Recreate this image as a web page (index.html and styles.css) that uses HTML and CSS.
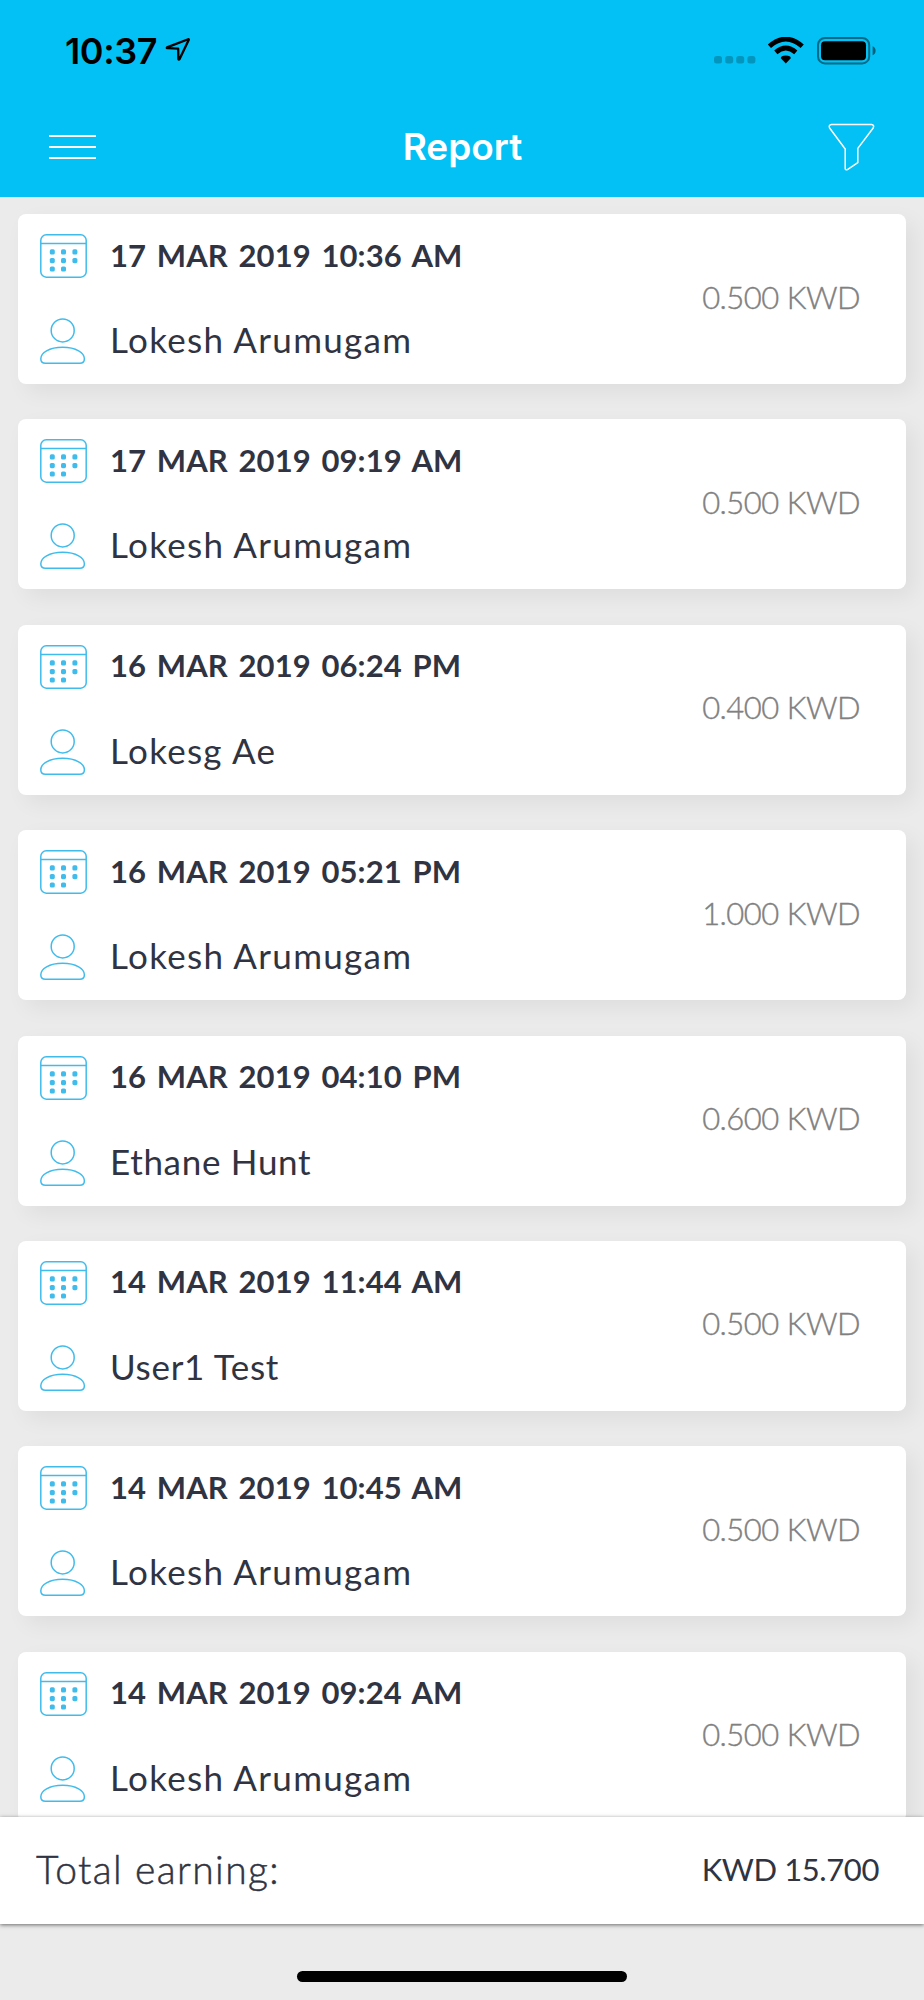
FILE: index.html
```html
<!DOCTYPE html>
<html lang="en">
<head>
<meta charset="utf-8">
<title>Report</title>
<link rel="stylesheet" href="styles.css">
</head>
<body>
<svg class="defs" width="0" height="0">
  <symbol id="calendar" viewBox="0 0 47 44">
    <rect x=".8" y=".8" width="45.4" height="42.4" rx="5.5" fill="none" stroke="#40bcec" stroke-width="1.5"/>
    <path d="M1 9.5H46" stroke="#40bcec" stroke-width="1.4"/>
    <g fill="#40bcec">
      <rect x="9.8" y="15.3" width="5" height="5.2" rx="1.6"/><rect x="21" y="15.3" width="5" height="5.2" rx="1.6"/><rect x="32.4" y="15.3" width="5" height="5.2" rx="1.6"/>
      <rect x="9.8" y="24" width="5" height="5.2" rx="1.6"/><rect x="21" y="24" width="5" height="5.2" rx="1.6"/><rect x="32.4" y="24" width="5" height="5.2" rx="1.6"/>
      <rect x="9.8" y="32.4" width="5" height="5.2" rx="1.6"/><rect x="21" y="32.4" width="5" height="5.2" rx="1.6"/>
    </g>
  </symbol>
  <symbol id="person" viewBox="0 0 47 47">
    <g fill="none" stroke="#40bcec" stroke-width="1.5">
      <circle cx="22.7" cy="12.4" r="11.5"/>
      <path d="M.8 40.8C.8 35 9 29.3 22.6 29.3S44.4 35 44.4 40.8Q44.4 45.3 39.8 45.3H5.4Q.8 45.3 .8 40.8Z"/>
    </g>
  </symbol>
</svg>
<div class="screen">
  <header class="header">
    <div class="status">
      <span class="clock">10:37</span>
      <svg class="location" width="26" height="25" viewBox="0 0 26 25"><path d="M23.2 2.2 2 10.4Q1.5 11 2.2 11.2L13.2 11.7 13.4 22.2Q13.8 23 14.5 22.2L23.8 2.8Q24 2 23.2 2.2Z" fill="none" stroke="#000" stroke-width="2.3" stroke-linejoin="round"/></svg>
      <svg class="signals" width="163" height="28" viewBox="0 0 163 28">
        <g fill="#000" fill-opacity=".22"><rect x="0" y="19" width="8" height="7.4" rx="2.5"/><rect x="11.2" y="19" width="8" height="7.4" rx="2.5"/><rect x="22.2" y="19" width="8" height="7.4" rx="2.5"/><rect x="33.4" y="19" width="8" height="7.4" rx="2.5"/></g>
        <path d="M55.6 8.6Q72-5.8 88.4 8.6" transform="translate(-.2 .7)" fill="none" stroke="#000" stroke-width="4.8"/>
        <path d="M61.8 15.4Q71.8 6.6 81.8 15.4" fill="none" stroke="#000" stroke-width="4.8"/>
        <path d="M66.8 21.3Q66.8 18.6 71.8 18.6T76.8 21.3L71.8 26.4Z"/>
        <rect x="104" y="1" width="51.2" height="25.4" rx="7" fill="none" stroke="#000" stroke-opacity=".45" stroke-width="2"/>
        <rect x="107" y="4.2" width="45" height="19" rx="4"/>
        <path d="M158.6 9.3Q161.6 10.5 161.6 13.8T158.6 18.3Z" fill-opacity=".5"/>
      </svg>
    </div>
    <div class="nav">
      <svg class="menu" width="48" height="27" viewBox="0 0 48 27"><path d="M0 2H47M0 13H47M0 24H47" stroke="#fff" stroke-width="2"/></svg>
      <h1 class="title">Report</h1>
      <svg class="filter" width="47" height="48" viewBox="0 0 47 48"><path d="M3.5 1.5H43.5Q46.6 2 45.2 5L29.8 25.4V39.7L19.4 46.6Q17.4 47.2 17.2 45.3V26L1.6 5Q.3 2 3.5 1.5Z" fill="none" stroke="#fff" stroke-width="1.5" stroke-linejoin="round"/></svg>
    </div>
  </header>
  <main class="list">
    <article class="card"><div class="details"><div class="row"><svg class="icon"><use href="#calendar"/></svg><span class="date">17 MAR 2019 10:36 AM</span></div><div class="row"><svg class="icon user"><use href="#person"/></svg><span class="name">Lokesh Arumugam</span></div></div><span class="amount">0.500 KWD</span></article>
    <article class="card"><div class="details"><div class="row"><svg class="icon"><use href="#calendar"/></svg><span class="date">17 MAR 2019 09:19 AM</span></div><div class="row"><svg class="icon user"><use href="#person"/></svg><span class="name">Lokesh Arumugam</span></div></div><span class="amount">0.500 KWD</span></article>
    <article class="card"><div class="details"><div class="row"><svg class="icon"><use href="#calendar"/></svg><span class="date">16 MAR 2019 06:24 PM</span></div><div class="row"><svg class="icon user"><use href="#person"/></svg><span class="name">Lokesg Ae</span></div></div><span class="amount">0.400 KWD</span></article>
    <article class="card"><div class="details"><div class="row"><svg class="icon"><use href="#calendar"/></svg><span class="date">16 MAR 2019 05:21 PM</span></div><div class="row"><svg class="icon user"><use href="#person"/></svg><span class="name">Lokesh Arumugam</span></div></div><span class="amount">1.000 KWD</span></article>
    <article class="card"><div class="details"><div class="row"><svg class="icon"><use href="#calendar"/></svg><span class="date">16 MAR 2019 04:10 PM</span></div><div class="row"><svg class="icon user"><use href="#person"/></svg><span class="name name-tight">Ethane Hunt</span></div></div><span class="amount">0.600 KWD</span></article>
    <article class="card"><div class="details"><div class="row"><svg class="icon"><use href="#calendar"/></svg><span class="date">14 MAR 2019 11:44 AM</span></div><div class="row"><svg class="icon user"><use href="#person"/></svg><span class="name name-tight">User1 Test</span></div></div><span class="amount">0.500 KWD</span></article>
    <article class="card"><div class="details"><div class="row"><svg class="icon"><use href="#calendar"/></svg><span class="date">14 MAR 2019 10:45 AM</span></div><div class="row"><svg class="icon user"><use href="#person"/></svg><span class="name">Lokesh Arumugam</span></div></div><span class="amount">0.500 KWD</span></article>
    <article class="card"><div class="details"><div class="row"><svg class="icon"><use href="#calendar"/></svg><span class="date">14 MAR 2019 09:24 AM</span></div><div class="row"><svg class="icon user"><use href="#person"/></svg><span class="name">Lokesh Arumugam</span></div></div><span class="amount">0.500 KWD</span></article>
  </main>
  <footer class="total">
    <span class="total-label">Total earning:</span>
    <span class="total-value">KWD 15.700</span>
  </footer>
  <div class="home"><div class="home-bar"></div></div>
</div>
</body>
</html>
```

FILE: styles.css
```css
* { box-sizing: border-box; }
body { margin: 0; background: #ebebeb; font-family: Lato, "Open Sans", sans-serif; color: #303442; }
.defs { display: block; position: absolute; }
.screen { width: 924px; height: 2000px; display: flex; flex-direction: column; overflow: hidden; }
.header { flex: 0 0 197px; background: #03c1f4; font-family: Inter, sans-serif; }
.status { height: 100px; display: flex; align-items: flex-start; padding: 36px 47px 0 65px; color: #000; }
.clock { font-size: 36px; line-height: 30px; font-weight: 600; width: 100px; letter-spacing: -0.4px; white-space: nowrap; }
.location { margin-top: 1px; }
.signals { margin-left: auto; margin-top: 1px; }
.nav { height: 97px; display: flex; justify-content: space-between; align-items: flex-start; padding: 23px 49px 0 49px; }
.menu { margin-top: 11px; }
.title { margin: 2px 0 0; font-size: 37px; line-height: 44px; font-weight: 600; color: #fff; }
.list { flex: 0 0 1620px; overflow: hidden; padding: 17px 18px 0; display: flex; flex-direction: column; gap: 35.4px; }
.card { flex: 0 0 170px; background: #fff; border-radius: 8px; box-shadow: 8px 8px 22px rgba(0,0,0,.06); display: flex; justify-content: space-between; padding: 20px 46px 0 22px; }
.details { display: flex; flex-direction: column; gap: 41.5px; }
.row { display: flex; align-items: center; gap: 23px; height: 44px; }
.icon { width: 47px; height: 44px; flex: none; }
.user { height: 47px; }
.date { font-size: 31px; line-height: 44px; font-weight: 700; white-space: nowrap; word-spacing: 3px; letter-spacing: .1px; padding-bottom: 3px; }
.name { font-size: 35px; line-height: 44px; white-space: nowrap; padding-bottom: 5px; letter-spacing: 1.3px; }
.name-tight { letter-spacing: .7px; }
.amount { font-size: 31px; line-height: 44px; font-weight: 300; color: #808080; margin-top: 40.5px; white-space: nowrap; letter-spacing: -.5px; -webkit-text-stroke: .4px #808080; }
.total { position: relative; flex: 0 0 107px; background: #fff; box-shadow: 0 1px 4px rgba(0,0,0,.55); display: flex; justify-content: space-between; align-items: center; padding: 0 45px 3px 36px; }
.total-label { font-size: 39px; font-weight: 300; letter-spacing: 1.4px; -webkit-text-stroke: .5px #303442; }
.total-value { font-size: 31px; letter-spacing: -.4px; }
.home { flex: 1; padding-top: 47px; }
.home-bar { width: 330px; height: 11px; margin: 0 auto; border-radius: 6px; background: #000; }
```
